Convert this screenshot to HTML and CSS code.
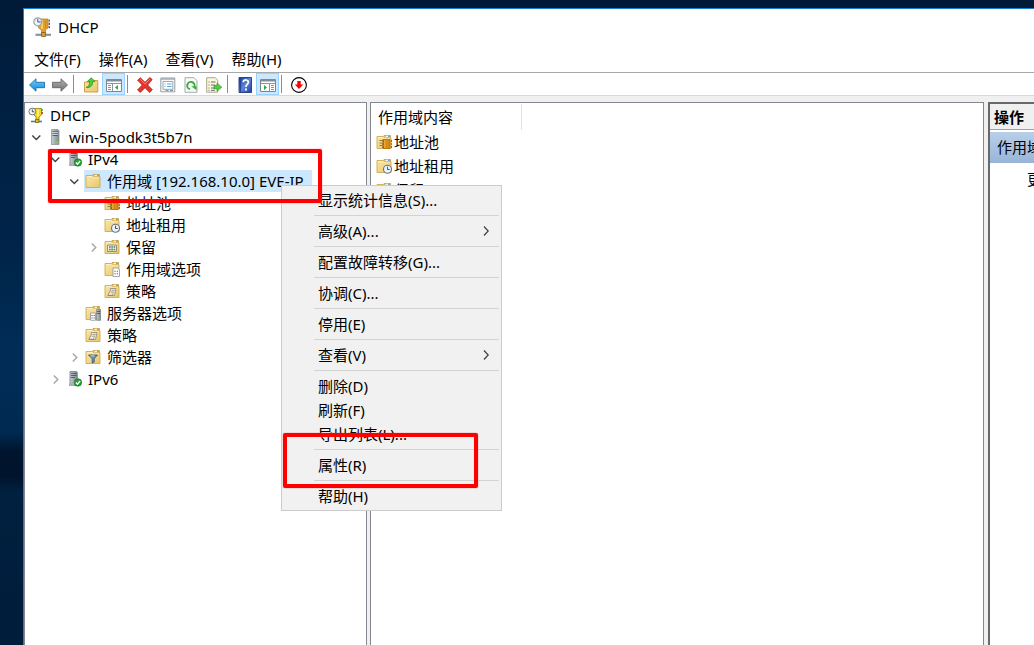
FILE: index.html
```html
<!DOCTYPE html>
<html lang="zh-CN">
<head>
<meta charset="utf-8">
<meta name="viewport" content="width=device-width, initial-scale=1">
<title>DHCP</title>
<link rel="stylesheet" href="styles.css">
</head>
<body class="desktop">
<svg class="defs" aria-hidden="true">
  <defs>
    <linearGradient id="g-folder" x1="0" y1="0" x2="1" y2="1"><stop offset="0" stop-color="#fbe7a5"/><stop offset="1" stop-color="#e6c66f"/></linearGradient>
    <linearGradient id="g-blue" x1="0" y1="0" x2="0" y2="1"><stop offset="0" stop-color="#6fd0fa"/><stop offset="1" stop-color="#1287d8"/></linearGradient>
    <linearGradient id="g-grey" x1="0" y1="0" x2="0" y2="1"><stop offset="0" stop-color="#b4b4b4"/><stop offset="1" stop-color="#707070"/></linearGradient>
    <linearGradient id="g-server" x1="0" y1="0" x2="1" y2="0"><stop offset="0" stop-color="#c9cfd4"/><stop offset="1" stop-color="#7b858d"/></linearGradient>
    <linearGradient id="g-help" x1="0" y1="0" x2="1" y2="1"><stop offset="0" stop-color="#1c3f9c"/><stop offset=".5" stop-color="#5d84d6"/><stop offset="1" stop-color="#1c3f9c"/></linearGradient>
  </defs>
  <symbol id="folder" viewBox="0 0 16 16">
    <path d="M8 3V1.5h6.5V4" fill="#e9cf86" stroke="#c39a3e" stroke-width=".8"/>
    <path d="M10 2.3h3" stroke="#fff"/><path d="M12 2.3h1.6" stroke="#3b8fd0"/>
    <path d="M1 2.5h6.5l1 1.3H15v10.7H1z" fill="url(#g-folder)" stroke="#d0a951" stroke-width=".9"/>
    <path d="M2 3.5h5.1l1 1.3h6" fill="none" stroke="#fff4cc" stroke-width=".8"/>
  </symbol>
  <symbol id="server" viewBox="0 0 16 16">
    <path d="M4.5 .5h6.5l1 1V15.5H4.5z" fill="url(#g-server)" stroke="#8b949a" stroke-width=".8"/>
    <path d="M5.5 2.5h5.5M5.5 4.5h5.5M5.5 6.5h5.5" stroke="#4d565d" stroke-width=".9"/>
    <path d="M5.5 3.3h5.5M5.5 5.3h5.5" stroke="#eef1f3" stroke-width=".7"/>
    <path d="M9.5 12.5h2v2h-2z" fill="#6fe82a"/>
  </symbol>
  <symbol id="server-ok" viewBox="0 0 16 16">
    <path d="M4 .5h6.5l.8.8V14.5H4z" fill="url(#g-server)" stroke="#717a80" stroke-width=".8"/>
    <path d="M5 2.5h5.5M5 4.5h5.5M5 6.5h4" stroke="#4d565d" stroke-width=".9"/>
    <path d="M3 12.5h5v2.5H3z" fill="#a7afb5"/>
    <circle cx="12" cy="11.5" r="3.7" fill="#27a336" stroke="#12761e" stroke-width=".7"/>
    <path d="M9.9 11.5l1.6 1.7 2.6-3.2" fill="none" stroke="#fff" stroke-width="1.3"/>
  </symbol>
  <symbol id="pool" viewBox="0 0 16 16">
    <use href="#folder"/>
    <path d="M3.5 6.5h3M3.5 9h3M3.5 11.5h3" stroke="#8a7a45"/>
    <path d="M7 5.5h7v9H7z" fill="#d98a17" stroke="#a96b10" stroke-width=".8"/>
    <path d="M8.8 6v8" stroke="#f3b640"/>
    <path d="M15 6h1v2h-1z" fill="#3d73ce"/><path d="M15 9h1v2h-1z" fill="#3fae49"/><path d="M15 12h1v2h-1z" fill="#d9432f"/>
    <path d="M6 7h2M6 10h2M6 13h2" stroke="#6b4308" stroke-width=".8"/>
  </symbol>
  <symbol id="lease" viewBox="0 0 16 16">
    <use href="#folder"/>
    <circle cx="11.5" cy="11.3" r="4" fill="#eaf4fa" stroke="#68757e" stroke-width="1.1"/>
    <path d="M11.5 8.7v2.8h2.2" fill="none" stroke="#36556c"/>
  </symbol>
  <symbol id="reserve" viewBox="0 0 16 16">
    <use href="#folder"/>
    <path d="M3.5 6h9v6.5h-9z" fill="#eef0e2" stroke="#7c7c65" stroke-width=".8"/>
    <path d="M5 7.3h1.6v1.5H5zM7.3 7.3h1.6v1.5H7.3zM9.6 7.3h1.6v1.5H9.6zM5 9.8h1.6v1.5H5zM9.6 9.8h1.6v1.5H9.6z" fill="#64706b"/><path d="M7.3 9.6h1.6v1.8H7.3z" fill="#2aa636"/>
  </symbol>
  <symbol id="options" viewBox="0 0 16 16">
    <use href="#folder"/>
    <path d="M9 7h4.5L15.5 9v6.5H9z" fill="#fff" stroke="#8e9499" stroke-width=".8"/>
    <path d="M10.4 10.3h1.2M12.8 10.3H14M10.4 12.8h1.2M12.8 12.8H14" stroke="#555f68" stroke-width="1.1"/>
  </symbol>
  <symbol id="policy" viewBox="0 0 16 16">
    <use href="#folder"/>
    <path d="M6.5 5.5h5.5l-1.5 7H4l1-3h.8z" fill="#f2eee2" stroke="#8c8573" stroke-width=".8"/>
    <path d="M7.5 7.3h3.3M7 9.2h3.2M3.8 12.3h4.5l.7-2" stroke="#8c8573" stroke-width=".8" fill="none"/>
  </symbol>
  <symbol id="server-options" viewBox="0 0 16 16">
    <use href="#folder"/>
    <path d="M11.5 4.5h4v10.8h-4z" fill="url(#g-server)" stroke="#7c888f" stroke-width=".8"/>
    <path d="M12 6.5h3M12 8.5h3" stroke="#414c54" stroke-width=".8"/><path d="M13.8 12.5h1.2v1.5h-1.2z" fill="#5fe02a"/>
    <path d="M5.5 8h5v7.3h-5z" fill="#fff" stroke="#8e9499" stroke-width=".8"/>
    <path d="M6.5 10.5h1M8.6 10.5h1M6.5 13h1M8.6 13h1" stroke="#3c464e"/>
  </symbol>
  <symbol id="filter" viewBox="0 0 16 16">
    <use href="#folder"/>
    <path d="M3.5 6h9L9.2 9.7v3.4l-2 .9V9.7z" fill="#6c92b8" stroke="#35536f" stroke-width=".8"/>
    <path d="M5.5 6.9h4" stroke="#e2effb" stroke-width=".8"/>
  </symbol>
  <symbol id="dhcp" viewBox="0 0 16 16">
    <path d="M6 1.5h7.5v6.3L11 10v3H8v-3L6 8z" fill="#eed71c" stroke="#8f7c09" stroke-width=".8"/>
    <path d="M10 2.5v7" stroke="#fff9a0" stroke-width="1.4"/><path d="M13.4 2.3h1.5v1.5h-1.5z" fill="#328b38"/><path d="M13.4 5h1.5v2h-1.5z" fill="#c83b1c"/>
    <path d="M3 14.5h11" stroke="#70767b" stroke-width="1.6"/><path d="M7.5 12.6h3.4v3H7.5z" fill="#ddc824" stroke="#5c4f17" stroke-width=".7"/>
    <circle cx="4.3" cy="4.5" r="3.4" fill="#f3f6f8" stroke="#6d767c"/><path d="M4.3 2.5v2.3h2" fill="none" stroke="#303940" stroke-width=".9"/>
  </symbol>
  <symbol id="chev-down" viewBox="0 0 16 16"><path d="M4.3 6.5l4 4 4-4" fill="none" stroke="#404040" stroke-width="1.4"/></symbol>
  <symbol id="chev-right" viewBox="0 0 16 16"><path d="M6.8 4.5l4 4-4 4" fill="none" stroke="#a6a6a6" stroke-width="1.4"/></symbol>
  <symbol id="chev-menu" viewBox="0 0 16 16"><path d="M6 3.5L10.2 8 6 12.5" fill="none" stroke="#404040" stroke-width="1.2"/></symbol>
</svg>

<main class="window">
  <header class="titlebar">
    <svg class="app-icon" viewBox="0 0 20 20" aria-hidden="true">
      <path d="M5.5 2H15v9l-2.5 2V16H8.500v-3L5.500 11z" fill="#e29f2e" stroke="#b97c1b" stroke-width=".7"/>
      <path d="M9 3v9" stroke="#f7cb67" stroke-width="2"/><path d="M12.700 3v8" stroke="#c98318"/>
      <path d="M15.500 2.500h1.500v2.300h-1.500z" fill="#39964a"/><path d="M15.500 5.800h1.500v2.300h-1.500z" fill="#cc3d22"/><path d="M15.500 9h1.500v2.300h-1.500z" fill="#316fc6"/>
      <path d="M2.500 17.800h15.500" stroke="#8b9399" stroke-width="2.200"/><path d="M8.500 15.500h4v4h-4z" fill="#d5a02d" stroke="#775710" stroke-width=".7"/>
      <circle cx="4.800" cy="4.800" r="4" fill="#edf3f7" stroke="#9aa5ad" stroke-width="1.200"/><path d="M4.800 2v3h3" fill="none" stroke="#4a5760"/>
    </svg>
    <h1 class="title">DHCP</h1>
  </header>

  <nav class="menubar" aria-label="菜单栏">
    <button class="menubar-item" type="button">文件(F)</button>
    <button class="menubar-item" type="button">操作(A)</button>
    <button class="menubar-item" type="button">查看(V)</button>
    <button class="menubar-item" type="button">帮助(H)</button>
  </nav>

  <div class="toolbar" role="toolbar" aria-label="工具栏">
    <button class="tool" type="button" aria-label="后退"><svg class="icon" viewBox="0 0 16 16"><path d="M.5 8L7 1.800v3.500h8.500v5.400H7v3.500z" fill="url(#g-blue)" stroke="#1b6fae" stroke-width=".9"/></svg></button>
    <button class="tool" type="button" aria-label="前进"><svg class="icon" viewBox="0 0 16 16"><path d="M15.500 8L9 1.800v3.500H.5v5.400H9v3.500z" fill="url(#g-grey)" stroke="#666" stroke-width=".9"/></svg></button>
    <span class="tool-sep"></span>
    <button class="tool" type="button" aria-label="上移一级"><svg class="icon" viewBox="0 0 16 16"><path d="M1.500 5h5l1-1.500h7.300v11.500H1.500z" fill="url(#g-folder)" stroke="#c59b42" stroke-width=".9"/><path d="M3 10.500C6 9.500 6.700 7.500 6.500 4.500H4.300L8.300.8l3.700 3.700H9.700c.3 4-2.300 6.700-6.700 6z" fill="#4ed032" stroke="#258d18" stroke-width=".7"/></svg></button>
    <button class="tool tool-on" type="button" aria-label="显示控制台树" aria-pressed="true"><svg class="icon" viewBox="0 0 16 16"><path d="M.5 2.500h15v12H.5z" fill="#fff" stroke="#7b8790"/><path d="M1 3.500h14" stroke="#7f8d99" stroke-width="2"/><path d="M1 6.500h14M6.500 7v7" stroke="#8b969e"/><path d="M2 8.500h3M2 10.500h3M2 12.500h3" stroke="#5d9fe0"/><path d="M12 8v5L9 10.500z" fill="#26ae30"/></svg></button>
    <span class="tool-sep"></span>
    <button class="tool" type="button" aria-label="删除"><svg class="icon" viewBox="0 0 16 16"><path d="M3.300.7L8 5.300 12.800.5l2.400 2.100L10.700 8l4.700 4.800-2.800 2.700L8 10.700l-4.700 4.800-2.800-2.600L5.200 8 .6 3.200z" fill="#e5342c" stroke="#ad1814" stroke-width=".7"/><path d="M3.200 2.400l4.800 4.500 4.800-4.600" stroke="#f58b82" fill="none"/></svg></button>
    <button class="tool" type="button" aria-label="属性"><svg class="icon" viewBox="0 0 16 16"><path d="M.8 1h14v13.800H.8z" fill="#f6f8f9" stroke="#8b949b" stroke-width=".9"/><path d="M1 2h13.500" stroke="#9faab3" stroke-width="1.400"/><path d="M3 4.500h9.800v7.800H3z" fill="#fff" stroke="#8d9dab" stroke-width=".9"/><path d="M4.500 7h1M7 7h4.500M4.500 9.500h1M7 9.500h4.500" stroke="#57a7d6"/><path d="M5.500 13.500h3M10 13.500h3" stroke="#8b949b"/></svg></button>
    <button class="tool" type="button" aria-label="刷新"><svg class="icon" viewBox="0 0 16 16"><path d="M2 .7h9l3 3v11.600H2z" fill="#f8f9fa" stroke="#9aa1a6" stroke-width=".9"/><path d="M7 12.200A3.700 3.700 0 1 1 11.500 9.500" fill="none" stroke="#32ad37" stroke-width="1.900"/><path d="M8.300 9.300h5.200v3.900z" fill="#32ad37"/></svg></button>
    <button class="tool" type="button" aria-label="导出列表"><svg class="icon" viewBox="0 0 16 16"><path d="M.7.7h8.600l2.400 2.500v12H.7z" fill="#fcf7db" stroke="#a39c7c" stroke-width=".9"/><path d="M2.500 5h1M5 5h4.500M2.500 8h1M5 8h4M2.500 11h1M5 11h4M2.500 13.300h1M5 13.300h4" stroke="#66717c"/><path d="M8 8.500h3V6l4.700 4.200L11 14.200v-2.500H8z" fill="#52cf3d" stroke="#258d1b" stroke-width=".6"/></svg></button>
    <span class="tool-sep"></span>
    <button class="tool" type="button" aria-label="帮助"><svg class="icon" viewBox="0 0 16 16"><path d="M2 .5h12.500v15H2z" fill="url(#g-help)" stroke="#1b3585" stroke-width=".9"/><path d="M3.500 1v14" stroke="#234398"/><path d="M6.200 5.300c0-3.200 5.300-3 5.200 0 0 2-2.500 2-2.500 4.600" fill="none" stroke="#fff" stroke-width="1.700"/><path d="M8 11.500h1.900v1.900H8z" fill="#fff"/></svg></button>
    <button class="tool tool-on" type="button" aria-label="显示操作窗格" aria-pressed="true"><svg class="icon" viewBox="0 0 16 16"><path d="M.5 2.500h15v12H.5z" fill="#fff" stroke="#7b8790"/><path d="M1 3.500h14" stroke="#7f8d99" stroke-width="2"/><path d="M1 6.500h14M9.500 7v7" stroke="#8b969e"/><path d="M11 8.500h3M11 10.500h3M11 12.500h3" stroke="#5d9fe0"/><path d="M4 8v5l3-2.500z" fill="#26ae30"/></svg></button>
    <span class="tool-sep"></span>
    <button class="tool" type="button" aria-label="停用"><svg class="icon" viewBox="0 0 16 16"><circle cx="8" cy="8" r="7.400" fill="#fff" stroke="#000" stroke-width="1.100"/><path d="M6.300 4h3.400v3.500h2.500L8 12 3.800 7.500h2.500z" fill="#f00"/></svg></button>
  </div>

  <div class="panes">
    <section class="pane tree" aria-label="控制台树">
      <div class="row level-0"><button class="node" type="button"><svg class="icon"><use href="#dhcp"/></svg>DHCP</button></div>
      <div class="row level-1"><svg class="chevron"><use href="#chev-down"/></svg><button class="node" type="button"><svg class="icon"><use href="#server"/></svg>win-5podk3t5b7n</button></div>
      <div class="row level-2"><svg class="chevron"><use href="#chev-down"/></svg><button class="node" type="button"><svg class="icon"><use href="#server-ok"/></svg>IPv4</button></div>
      <div class="row level-3"><svg class="chevron"><use href="#chev-down"/></svg><button class="node node-selected" type="button"><svg class="icon"><use href="#folder"/></svg>作用域 [192.168.10.0] EVE-IP</button></div>
      <div class="row level-4"><svg class="chevron"></svg><button class="node" type="button"><svg class="icon"><use href="#pool"/></svg>地址池</button></div>
      <div class="row level-4"><svg class="chevron"></svg><button class="node" type="button"><svg class="icon"><use href="#lease"/></svg>地址租用</button></div>
      <div class="row level-4"><svg class="chevron"><use href="#chev-right"/></svg><button class="node" type="button"><svg class="icon"><use href="#reserve"/></svg>保留</button></div>
      <div class="row level-4"><svg class="chevron"></svg><button class="node" type="button"><svg class="icon"><use href="#options"/></svg>作用域选项</button></div>
      <div class="row level-4"><svg class="chevron"></svg><button class="node" type="button"><svg class="icon"><use href="#policy"/></svg>策略</button></div>
      <div class="row level-3"><svg class="chevron"></svg><button class="node" type="button"><svg class="icon"><use href="#server-options"/></svg>服务器选项</button></div>
      <div class="row level-3"><svg class="chevron"></svg><button class="node" type="button"><svg class="icon"><use href="#policy"/></svg>策略</button></div>
      <div class="row level-3"><svg class="chevron"><use href="#chev-right"/></svg><button class="node" type="button"><svg class="icon"><use href="#filter"/></svg>筛选器</button></div>
      <div class="row level-2"><svg class="chevron"><use href="#chev-right"/></svg><button class="node" type="button"><svg class="icon"><use href="#server-ok"/></svg>IPv6</button></div>
    </section>

    <section class="pane content" aria-label="作用域内容">
      <h2 class="column-head">作用域内容</h2>
      <button class="entry" type="button"><svg class="icon"><use href="#pool"/></svg>地址池</button>
      <button class="entry" type="button"><svg class="icon"><use href="#lease"/></svg>地址租用</button>
      <button class="entry" type="button"><svg class="icon"><use href="#reserve"/></svg>保留</button>
    </section>

    <aside class="actions" aria-label="操作">
      <h2 class="actions-head">操作</h2>
      <h3 class="actions-group">作用域</h3>
      <button class="actions-item" type="button">更多操作</button>
    </aside>
  </div>
</main>

<div class="context-menu" role="menu">
  <button class="command" role="menuitem" type="button">显示统计信息(S)...</button>
  <hr class="command-sep">
  <button class="command" role="menuitem" type="button">高级(A)...<svg class="icon"><use href="#chev-menu"/></svg></button>
  <hr class="command-sep">
  <button class="command" role="menuitem" type="button">配置故障转移(G)...</button>
  <hr class="command-sep">
  <button class="command" role="menuitem" type="button">协调(C)...</button>
  <hr class="command-sep">
  <button class="command" role="menuitem" type="button">停用(E)</button>
  <hr class="command-sep">
  <button class="command" role="menuitem" type="button">查看(V)<svg class="icon"><use href="#chev-menu"/></svg></button>
  <hr class="command-sep">
  <button class="command" role="menuitem" type="button">删除(D)</button>
  <button class="command" role="menuitem" type="button">刷新(F)</button>
  <button class="command" role="menuitem" type="button">导出列表(L)...</button>
  <hr class="command-sep">
  <button class="command" role="menuitem" type="button">属性(R)</button>
  <hr class="command-sep">
  <button class="command" role="menuitem" type="button">帮助(H)</button>
</div>

<div class="mark mark-scope"></div>
<div class="mark mark-properties"></div>
</body>
</html>
```
FILE: styles.css
```css
* {
  box-sizing: border-box;
}

.desktop {
  display: flex;
  min-height: 100vh;
  margin: 0;
  padding: 8px 0 0 23px;
  overflow: hidden;
  position: relative;
  background: linear-gradient(#001a38 0, #001f40 12%, #00254a 40%, #002d57 55%, #002a52 67%, #00142e 70%, #00142e 74%, #00203f 76%, #001d3b 100%);
  color: #000;
  font: 15px/22px "Noto Sans", "Noto Sans CJK SC", sans-serif;
}

.defs {
  position: absolute;
  width: 0;
  height: 0;
}

button {
  margin: 0;
  padding: 0;
  border: 0;
  background: none;
  color: inherit;
  font: inherit;
  text-align: left;
  white-space: nowrap;
}

h1, h2, h3 {
  margin: 0;
  font: inherit;
  white-space: nowrap;
}

.icon {
  flex: none;
  display: block;
  width: 16px;
  height: 16px;
}

.window {
  flex: 1;
  min-width: 0;
  display: flex;
  flex-direction: column;
  border-top: 1px solid #1a7fd0;
  border-left: 1px solid #1a7fd0;
  background: #fff;
}

.titlebar {
  display: flex;
  align-items: center;
  gap: 5px;
  height: 36px;
  padding-left: 9px;
}

.app-icon {
  width: 20px;
  height: 20px;
}

.menubar {
  display: flex;
  align-items: center;
  gap: 18px;
  height: 28px;
  padding-left: 10px;
  border-bottom: 1px solid #a9a9a9;
}

.toolbar {
  display: flex;
  align-items: center;
  height: 23px;
  padding-left: 1px;
  border-bottom: 1px solid #d9d9d9;
}

.tool {
  display: flex;
  align-items: center;
  justify-content: center;
  width: 23px;
  height: 22px;
  padding-top: 2px;
}

.tool-on {
  padding-top: 1px;
  border: 1px solid #99d1ff;
  background: #cce8ff;
}

.tool-sep {
  width: 1px;
  height: 18px;
  margin: 0 5px 0 2px;
  background: #8c8c8c;
}

.panes {
  flex: 1;
  display: grid;
  grid-template-columns: 343px 1fr 50px;
  column-gap: 3px;
  padding-top: 6px;
  background: #f0f0f0;
}

.pane {
  min-width: 0;
  border: 1px solid #828790;
  border-bottom: 0;
  background: #fff;
}

.tree {
  padding-top: 1px;
}

.row {
  display: flex;
  align-items: center;
  height: 22px;
  padding-left: 3px;
}

.level-2 { padding-left: 22px; }
.level-3 { padding-left: 41px; }
.level-4 { padding-left: 60px; }

.chevron {
  flex: none;
  width: 16px;
  height: 16px;
  margin-right: 2px;
}

.node {
  display: flex;
  align-items: center;
  gap: 6px;
  height: 22px;
  padding: 0 8px 0 1px;
}

.level-0 .node {
  padding-left: 0;
}

.node-selected {
  background: #cce8ff;
}

.content {
  display: flex;
  flex-direction: column;
  align-items: flex-start;
  padding-top: 1px;
}

.column-head {
  width: 151px;
  height: 26px;
  padding-left: 7px;
  border-right: 1px solid #e2e2e2;
  line-height: 26px;
}

.entry {
  display: flex;
  align-items: center;
  gap: 2px;
  height: 24px;
  padding-left: 5px;
}

.actions {
  min-width: 0;
  margin-left: 1px;
  margin-right: 2px;
  overflow: hidden;
  border-top: 2px solid #696969;
  border-left: 2px solid #696969;
  background: #fff;
}

.actions {
  margin-right: 0;
}

.panes {
  grid-template-columns: 343px 1fr 47px;
}

.actions-head {
  height: 26px;
  margin-bottom: 2px;
  padding-left: 4px;
  border-bottom: 1px solid #a0a0a0;
  background: #f0f0f0;
  font-weight: 700;
  line-height: 26px;
}

.actions-group {
  height: 31px;
  padding-left: 7px;
  background: linear-gradient(#b9cfe9, #98b4d6);
  line-height: 31px;
}

.actions-item {
  height: 32px;
  padding-left: 37px;
}

.context-menu {
  position: absolute;
  top: 185px;
  left: 281px;
  width: 221px;
  padding: 2px;
  border: 1px solid #ccc;
  background: #f1f1f1;
}

.command {
  display: flex;
  align-items: center;
  justify-content: space-between;
  width: 100%;
  height: 24px;
  padding: 0 5px 0 34px;
}

.command-sep {
  height: 1px;
  margin: 3px 0 3px 30px;
  border: 0;
  background: #d3d3d3;
}

.mark {
  position: absolute;
  border: 4px solid #f00;
  border-radius: 2px;
  box-shadow: 0 0 1px #f00;
  pointer-events: none;
}

.mark-scope {
  top: 149px;
  left: 48px;
  width: 274px;
  height: 54px;
}

.mark-properties {
  top: 433px;
  left: 283px;
  width: 195px;
  height: 55px;
}
```
